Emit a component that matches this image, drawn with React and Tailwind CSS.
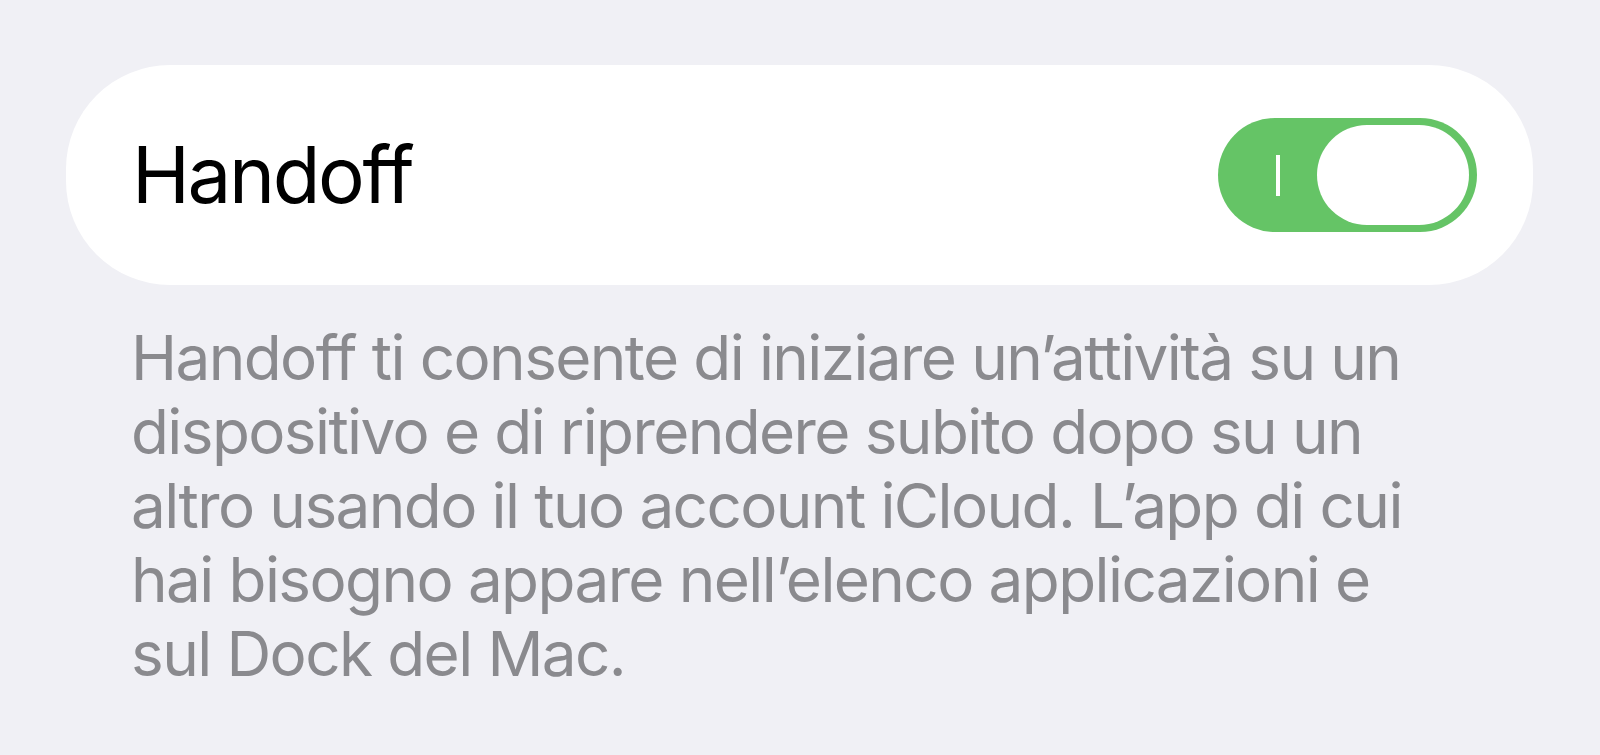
import React, { useState } from "react";

const Toggle = ({ on, onChange }) => (
  <button
    onClick={() => onChange(!on)}
    className={`relative flex h-[114px] w-[259px] shrink-0 items-center rounded-full ${on ? "bg-[#65c466]" : "bg-[#e9e9eb]"}`}
  >
    {/* the "I" marker shown when the switch is on */}
    {on && <span className="absolute left-[58px] top-[37px] h-[41px] w-[4px] bg-white" />}
    <span
      className={`absolute top-[7px] h-[100px] w-[152px] rounded-full bg-white ${on ? "right-[8px]" : "left-[8px]"}`}
    />
  </button>
);

const App = () => {
  const [handoff, setHandoff] = useState(true);

  return (
    <div
      className="min-h-screen bg-[#f0f0f5] pt-[65px]"
      style={{ fontFamily: "Inter, 'Liberation Sans', sans-serif" }}
    >
      <div className="ml-[66px] mr-[67px] flex h-[220px] items-center justify-between rounded-[104px] bg-white pl-[66px] pr-[56px]">
        <span className="text-[78px] leading-none tracking-[-2.4px] text-black">Handoff</span>
        <Toggle on={handoff} onChange={setHandoff} />
      </div>

      <p className="ml-[131px] mt-[36px] text-[62px] leading-[74px] tracking-[-1.6px] text-[#8a8a8e]">
        Handoff ti consente di iniziare un’attività su un
        <br />
        dispositivo e di riprendere subito dopo su un
        <br />
        altro usando il tuo account iCloud. L’app di cui
        <br />
        hai bisogno appare nell’elenco applicazioni e
        <br />
        sul Dock del Mac.
      </p>
    </div>
  );
};

export default App;
